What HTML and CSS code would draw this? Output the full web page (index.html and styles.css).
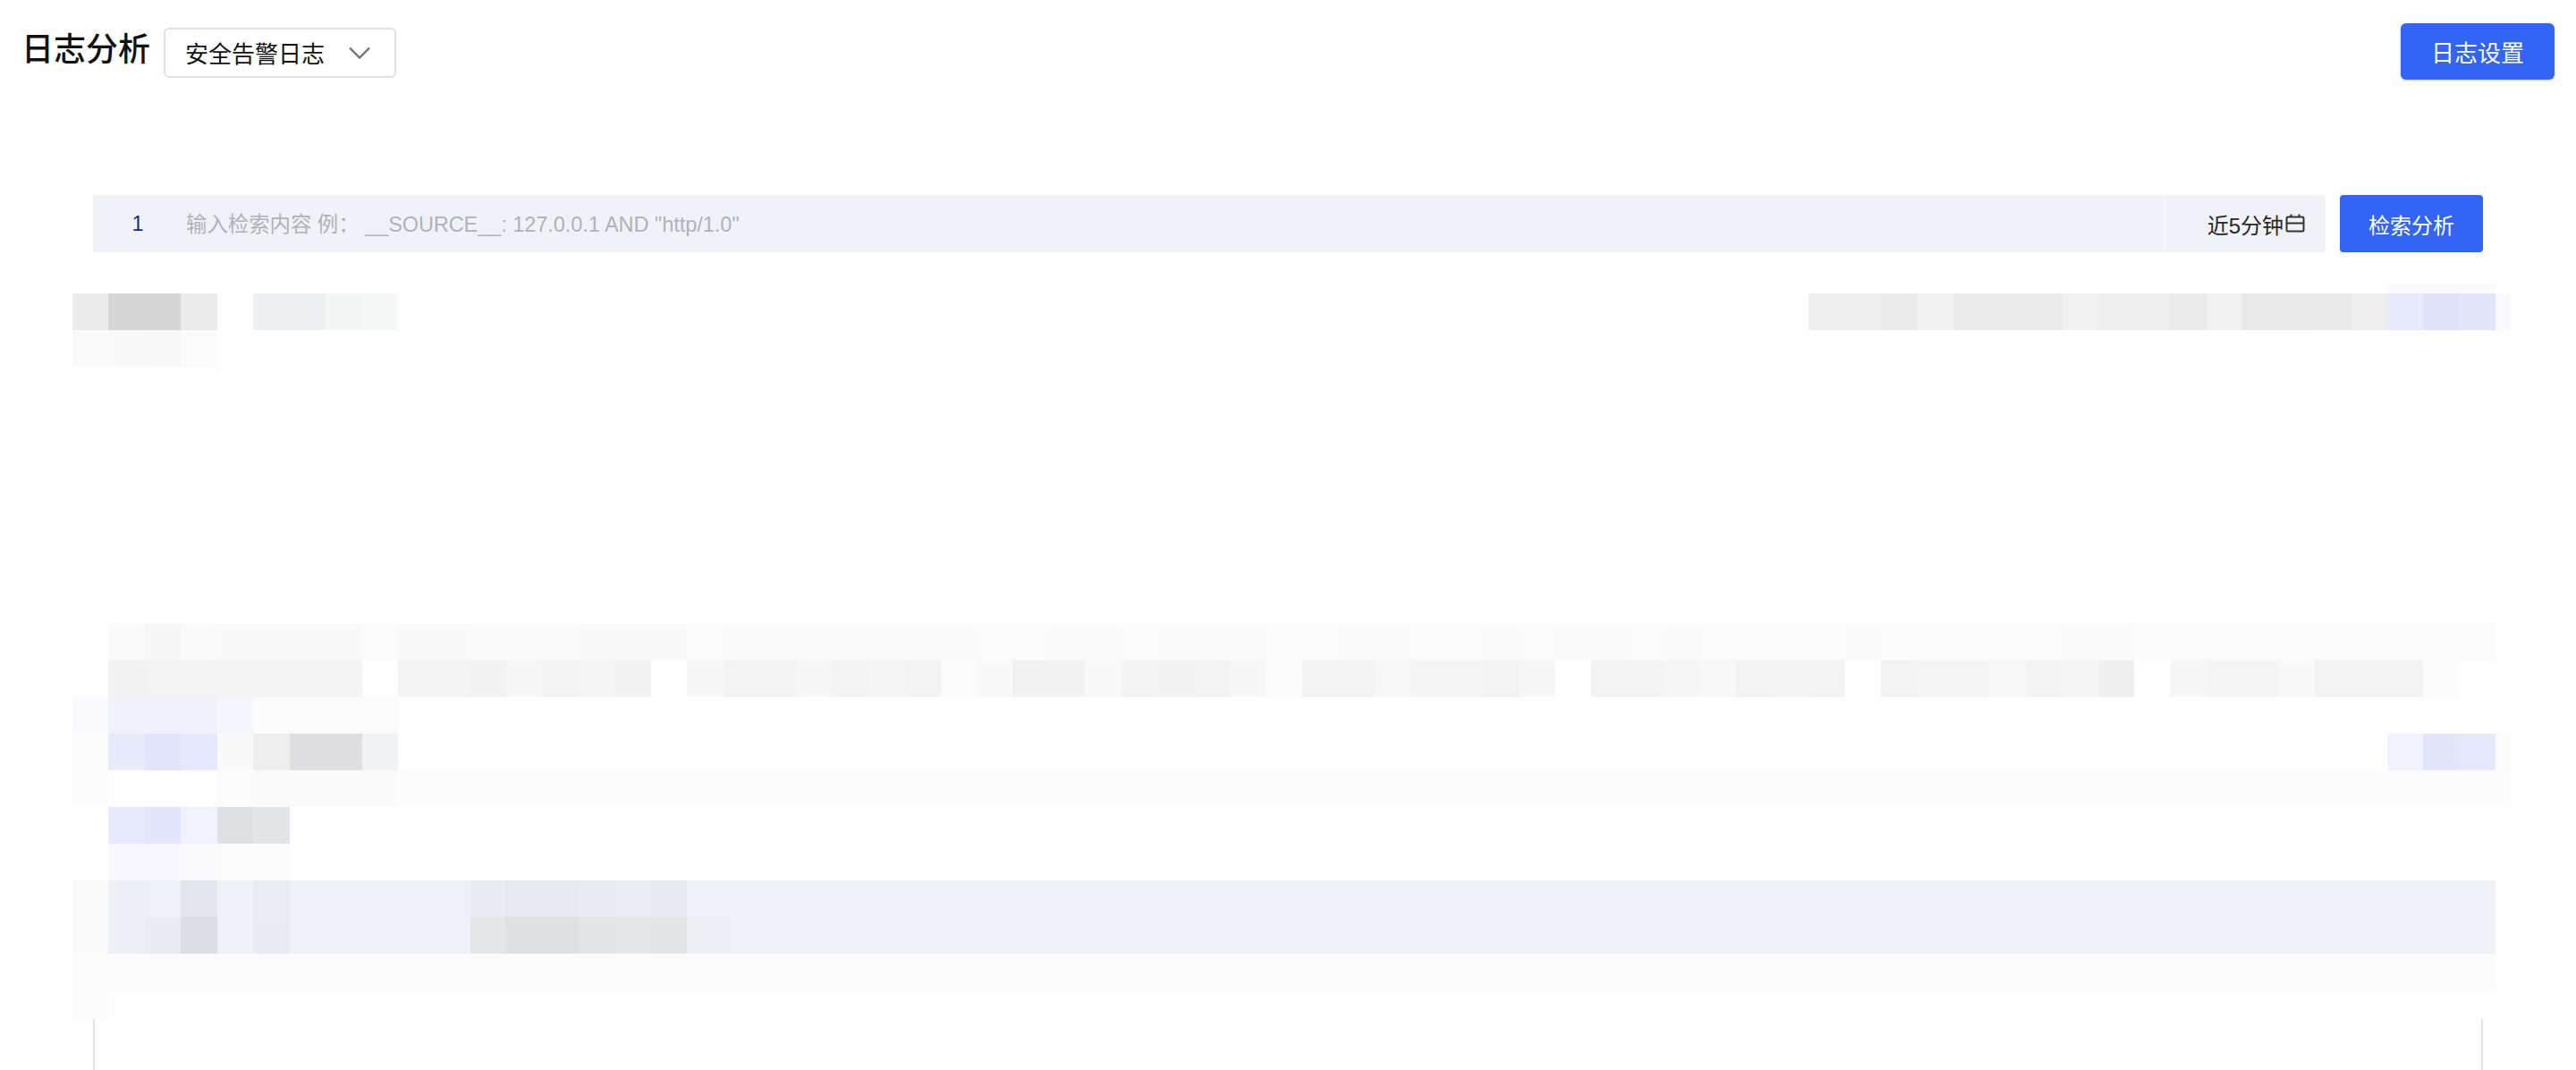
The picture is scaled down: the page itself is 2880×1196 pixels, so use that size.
FILE: index.html
```html
<!DOCTYPE html>
<html lang="zh-CN">
<head>
    <meta charset="UTF-8">
    <title>日志分析</title>
    <link rel="stylesheet" href="styles.css">
</head>
<body>
    <!-- Header -->
    <div class="header">
        <div class="header-left">
            <h1 class="title">日志分析</h1>
            <div class="select">
                <span>安全告警日志</span>
                <svg class="chevron" viewBox="0 0 24 14" width="24" height="14">
                    <polyline points="1,1.5 12,12.5 23,1.5"></polyline>
                </svg>
            </div>
        </div>
        <button class="btn btn-settings">日志设置</button>
    </div>

    <!-- Search bar -->
    <div class="search">
        <div class="search-bar">
            <span class="line-no">1</span>
            <span class="placeholder">输入检索内容 例： __SOURCE__: 127.0.0.1 AND "http/1.0"</span>
        </div>
        <div class="range">
            <span>近5分钟</span>
            <svg class="calendar" viewBox="0 0 22 22" width="22" height="22">
                <rect x="1.5" y="3.5" width="19" height="16" rx="1.5"></rect>
                <line x1="1.5" y1="10.5" x2="20.5" y2="10.5"></line>
                <line x1="6.5" y1="0.5" x2="6.5" y2="4"></line>
                <line x1="15.5" y1="0.5" x2="15.5" y2="4"></line>
            </svg>
        </div>
        <button class="btn btn-search">检索分析</button>
    </div>

    <!-- Masked result area, filled in by mosaic.js -->
    <div class="mosaic" id="mosaic"></div>

    <div class="panel"></div>

    <script src="mosaic.js"></script>
</body>
</html>
```

FILE: styles.css
```css
html, body {
    margin: 0;
    padding: 0;
    background: #fff;
}
body {
    font-family: "Liberation Sans", "Noto Sans CJK SC", sans-serif;
    color: #1b1b1f;
    height: 1196px;
    overflow: hidden;
}
.header {
    display: flex;
    justify-content: space-between;
    align-items: center;
    height: 63px;
    padding: 26px 24px 0 24px;
}
.header-left {
    display: flex;
    align-items: center;
    margin-top: 2px;
}
.title {
    margin: 0 15px 0 0;
    padding-bottom: 6px;
    font-size: 36px;
    line-height: 50px;
    font-weight: 500;
    color: #111;
}
.select {
    display: flex;
    align-items: center;
    justify-content: space-between;
    box-sizing: border-box;
    width: 260px;
    height: 56px;
    padding: 0 27px 0 22px;
    border: 2px solid #dfe1e7;
    border-radius: 6px;
    font-size: 26px;
    color: #111;
}
.chevron polyline {
    fill: none;
    stroke: #6b7280;
    stroke-width: 2.4;
}
.btn {
    border: none;
    border-radius: 6px;
    background: #3264f6;
    color: #fff;
    font-family: inherit;
}
.btn-settings {
    width: 172px;
    height: 63px;
    font-size: 26px;
    box-shadow: 0 1px 3px rgba(0, 0, 0, 0.18);
}
.search {
    display: flex;
    height: 64px;
    margin: 129px 104px 0 104px;
}
.search-bar {
    flex: 1;
    display: flex;
    align-items: center;
    background: #f1f2f7;
    font-size: 23.4px;
}
.line-no {
    width: 100px;
    padding-right: 4px;
    text-align: center;
    color: #1a2a78;
}
.placeholder {
    padding-bottom: 2px;
    color: #aeb2bb;
    white-space: pre;
}
.range {
    display: flex;
    align-items: center;
    justify-content: flex-end;
    box-sizing: border-box;
    width: 180px;
    padding-right: 23px;
    background: #f1f2f7;
    border-left: 1px solid #f8f9fb;
    border-radius: 0 4px 4px 0;
    font-size: 24px;
    color: #27272b;
}
.calendar {
    margin-left: 2px;
}
.calendar rect,
.calendar line {
    fill: none;
    stroke: #333;
    stroke-width: 2;
}
.btn-search {
    width: 160px;
    margin-left: 16px;
    border-radius: 4px;
    font-size: 24px;
}
.mosaic {
    margin: 18px 73px 0 77px;
    background: #fefefe;
}
.mosaic-row {
    display: grid;
    grid-template-columns: 4px repeat(67, 40.44px) 17px;
}
.panel {
    height: 57px;
    margin: 0 104px;
    border-left: 2px solid #e3e3e8;
    border-right: 2px solid #e3e3e8;
}
```

FILE: mosaic.js
```js
// Each row: [height, first column, colours...]. Two-digit colours are greys.
const ROWS = [
    [18, 0, []],
    [10, 66, ['f9f9fe', 'f9f9fe', 'f9f9fe']],
    [41, 2, ['ec', 'd6', 'd6', 'eb', 'fe', 'eff0f1', 'eff0f1', 'f3f4f4', 'f6f7f7']],
    [41, 2, ['fa', 'f9', 'f8', 'fb']],
    [287, 0, []],
    [41, 3, ['fa', 'f7', 'fa', 'f9', 'f9', 'f9', 'f9', 'fb', 'f9', 'f9', 'fa', 'fa', 'fa', 'f9', 'f9', 'f9', 'fb',
             'fa', 'fa', 'fa', 'fa', 'fa', 'fa', 'fa', 'fb', 'fb', 'fa', 'fa', 'fb', 'fa', 'fa', 'fa', 'fb', 'fb', 'fa', 'fa', 'fb', 'fb',
             'fa', 'fb', 'fa', 'fa', 'fb', 'fa', 'fb', 'fb', 'fb', 'fb', 'fa', 'fc', 'fb', 'fb', 'fb', 'fb', 'fa', 'fa', 'fc',
             'fb', 'fb', 'fb', 'fb', 'fb', 'fb', 'fb', 'fc', 'fb']],
    [41, 3, ['f1', 'f3', 'f3', 'f4', 'f4', 'f4', 'f4', 'fe', 'f4', 'f4', 'f2', 'f7', 'f3', 'f5', 'f2', 'fe', 'f7', 'f3', 'f3', 'f7',
             'f3', 'f5', 'f3', 'fb', 'f9', 'f2', 'f2', 'f9', 'f3', 'f2', 'f3', 'f7', 'fb', 'f3', 'f3', 'f8', 'f5', 'f5', 'f3', 'f7', 'fe',
             'f3', 'f3', 'f6', 'f8', 'f3', 'f4', 'f3', 'fe', 'f3', 'f5', 'f5', 'f8', 'f3', 'f5', 'f0', 'fe', 'f7', 'f5', 'f5', 'f9',
             'f3', 'f3', 'f3', 'fc', 'fe']],
    [41, 2, ['f9f9fe', 'f1f1fd', 'f1f1fd', 'f1f1fd', 'f5f5fe', 'fbfbfc', 'fbfbfc', 'fbfbfc', 'fbfbfc']],
    [41, 2, ['fc', 'e8ebfc', 'e1e5fb', 'e6e9fc', 'f9f9fa', 'eeeeef', 'dfdfe3', 'dfdfe3', 'f1f2f5']],
    [41, 2, ['fc', 'fe', 'fe', 'fe', 'fb', 'fafafb', 'fafafb', 'fafafb', 'fafafb']],
    [41, 3, ['e8ebfc', 'e2e5fb', 'f0f3fd', 'dfe0e3', 'e4e5e8']],
    [41, 3, ['f8f8fe', 'f8f8fe', 'fafafe', 'fb', 'fb']],
    [41, 2, ['fafafb', 'eff0f6', 'f0f1f6', 'e5e6eb', 'f0f1f7', 'ecedf2', 'f0f1f7', 'f0f1f7', 'f0f1f7', 'f0f1f7', 'f0f1f7',
             'ebecf1', 'e8e9ee', 'e8e9ee', 'ebecf1', 'ecedf2', 'e9eaef']],
    [41, 2, ['fafafb', 'eff0f6', 'ebecf1', 'dddee3', 'f0f1f7', 'ebecf1', 'f0f1f7', 'f0f1f7', 'f0f1f7', 'f0f1f7', 'f0f1f7',
             'e5e6ea', 'dfe0e4', 'dfe0e4', 'e4e5e9', 'e6e7eb', 'e4e5e9', 'eff0f5']],
    [41, 2, []],
    [32, 2, ['fb']]
];

// Row tails that keep one colour up to the given column
const FILLS = {
    9: { from: 11, to: 70, colour: 'fcfcfd' },
    12: { from: 19, to: 69, colour: 'f0f1f7' },
    13: { from: 20, to: 69, colour: 'f0f1f7' },
    14: { from: 2, to: 69, colour: 'fb' }
};

function toColour(code) {
    return code.length === 2 ? '#' + code + code + code : '#' + code;
}

function addCell(row, column, code) {
    const cell = document.createElement('div');
    cell.style.gridColumnStart = column;
    cell.style.background = toColour(code);
    row.appendChild(cell);
}

const mosaic = document.getElementById('mosaic');

ROWS.forEach(function (data, index) {
    const row = document.createElement('div');
    row.className = 'mosaic-row';
    row.style.height = data[0] + 'px';

    data[2].forEach(function (code, i) {
        addCell(row, data[1] + i, code);
    });

    const fill = FILLS[index];
    if (fill) {
        for (let column = fill.from; column < fill.to; column++) {
            addCell(row, column, fill.colour);
        }
    }

    // Chips on the right side of two rows
    if (index === 2) {
        ['f0', 'ef', 'eb', 'f1', 'ec', 'ec', 'ec', 'f1', 'ef', 'ee', 'eb', 'f1', 'e9', 'e9', 'ea', 'ee',
         'e8ebfb', 'dee2fb', 'e2e6fb', 'f9f9fe'].forEach(function (code, i) {
            addCell(row, 50 + i, code);
        });
    }
    if (index === 8) {
        ['f1f4fe', 'e3e6fb', 'e6e9fb', 'fb'].forEach(function (code, i) {
            addCell(row, 66 + i, code);
        });
    }

    mosaic.appendChild(row);
});
```
